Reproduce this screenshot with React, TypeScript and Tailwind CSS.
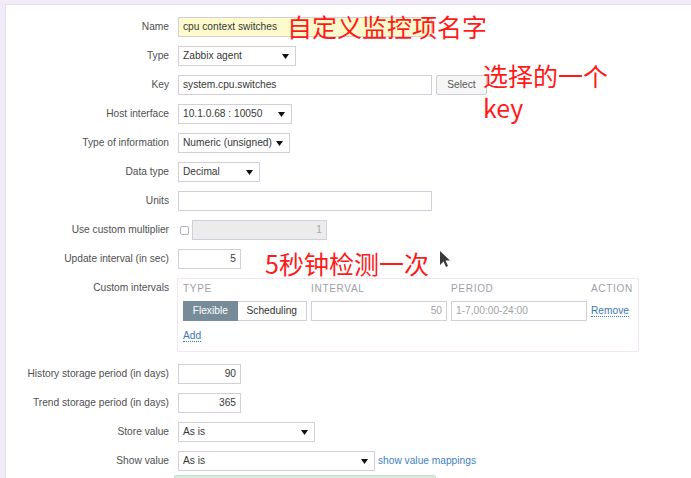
import React from 'react';

const FONT = "font-['Liberation_Sans',Arial,sans-serif]";
const INPUT = "h-[20px] border border-[#d3ced9] px-[4px] flex items-center";
const LINK = "text-[#3b78b6] border-b border-dotted border-[#3b78b6] leading-[11px]";
const HEAD = "leading-[12px] text-[10px] tracking-[0.7px] text-[#a0a0a6]";

const Arrow: React.FC = () => (
    <svg width="7" height="5" viewBox="0 0 7 5" className="shrink-0">
        <path d="M0 0 H7 L3.5 5 Z" fill="#111" />
    </svg>
);

const Select: React.FC<{ value: string; width: string }> = ({ value, width }) => (
    <div className={`${INPUT} ${width} bg-white text-[#383838] justify-between pr-[6px]`}>
        <span>{value}</span>
        <Arrow />
    </div>
);

const Row: React.FC<{ label: string; children: React.ReactNode; className?: string }> = ({ label, children, className }) => (
    <div className={`flex items-start gap-[9px] ${className ?? ''}`}>
        <div className="w-[163px] shrink-0 text-right leading-[20px] text-[#505050]">{label}</div>
        <div className="flex items-center">{children}</div>
    </div>
);

const App: React.FC = () => {
    return (
        <div className={`relative min-h-screen overflow-hidden bg-[#f1ecf8] pt-[4px] pl-[5px] text-[10.2px] ${FONT}`}>
            <div className="border-t border-l border-[#e6def0] bg-white pt-[12px] pb-[20px] flex flex-col gap-[9px] min-h-[480px]">
                <Row label="Name">
                    <div className={`${INPUT} w-[254px] bg-[#fdfacb] text-[#383838]`}>cpu context switches</div>
                </Row>
                <Row label="Type">
                    <Select value="Zabbix agent" width="w-[118px]" />
                </Row>
                <Row label="Key">
                    <div className={`${INPUT} w-[254px] bg-white text-[#383838]`}>system.cpu.switches</div>
                    <div className="ml-[4px] h-[20px] w-[51px] border border-[#cfcbd6] rounded-[2px] bg-[#f6f6f6] flex items-center justify-center text-[#555]">
                        Select
                    </div>
                </Row>
                <Row label="Host interface">
                    <Select value="10.1.0.68 : 10050" width="w-[114px]" />
                </Row>
                <Row label="Type of information">
                    <Select value="Numeric (unsigned)" width="w-[112px]" />
                </Row>
                <Row label="Data type">
                    <Select value="Decimal" width="w-[82px]" />
                </Row>
                <Row label="Units">
                    <div className={`${INPUT} w-[254px] bg-white`} />
                </Row>
                <Row label="Use custom multiplier">
                    <div className="ml-[2px] h-[9px] w-[9px] rounded-[2px] border border-[#b5b0bc] bg-white" />
                    <div className={`${INPUT} ml-[3px] w-[135px] justify-end bg-[#ececec] text-[#aaa]`}>1</div>
                </Row>
                <Row label="Update interval (in sec)">
                    <div className={`${INPUT} w-[63px] justify-end bg-white text-[#383838]`}>5</div>
                </Row>
                <Row label="Custom intervals" className="mb-[3px]">
                    <div className="-ml-[1px] w-[462px] border border-[#f2e6f3] pt-[4px] px-[5px] pb-[9px]">
                        <div className="grid grid-cols-[124px_136px_136px_auto] gap-x-[4px] gap-y-[6px]">
                            <div className={HEAD}>TYPE</div>
                            <div className={HEAD}>INTERVAL</div>
                            <div className={HEAD}>PERIOD</div>
                            <div className={HEAD}>ACTION</div>

                            <div className="flex h-[20px]">
                                <div className="w-[55px] bg-[#768d99] text-white flex items-center justify-center">Flexible</div>
                                <div className="w-[70px] border border-l-0 border-[#d3ced9] text-[#333] flex items-center justify-center">Scheduling</div>
                            </div>
                            <div className={`${INPUT} justify-end bg-white text-[#a3a3a3]`}>50</div>
                            <div className={`${INPUT} bg-white text-[#a3a3a3]`}>1-7,00:00-24:00</div>
                            <div className="flex items-center">
                                <span className={LINK}>Remove</span>
                            </div>
                        </div>
                        <div className="mt-[9px] flex">
                            <span className={LINK}>Add</span>
                        </div>
                    </div>
                </Row>
                <Row label="History storage period (in days)">
                    <div className={`${INPUT} w-[63px] justify-end bg-white text-[#383838]`}>90</div>
                </Row>
                <Row label="Trend storage period (in days)">
                    <div className={`${INPUT} w-[63px] justify-end bg-white text-[#383838]`}>365</div>
                </Row>
                <Row label="Store value">
                    <Select value="As is" width="w-[137px]" />
                </Row>
                <Row label="Show value">
                    <Select value="As is" width="w-[197px]" />
                    <span className="ml-[3px] text-[#3f80c2]">show value mappings</span>
                </Row>
                <div className="-mt-[5px] ml-[168px] h-[20px] w-[262px] rounded-t-[2px] border border-[#c7dec9] bg-[#d8ead9]" />
            </div>

            {/* red annotations over the screenshot */}
            <div className="absolute left-[287px] top-[14px] text-[25px] leading-none text-[#ff1a1a] font-['Noto_Sans_CJK_SC',sans-serif]">
                自定义监控项名字
            </div>
            <div className="absolute left-[483px] top-[59px] text-[25px] leading-[32px] text-[#ff1a1a] font-['Noto_Sans_CJK_SC',sans-serif]">
                选择的一个
                <br />
                key
            </div>
            <div className="absolute left-[265px] top-[251px] text-[25px] leading-none text-[#ff1a1a] font-['Noto_Sans_CJK_SC',sans-serif]">
                5秒钟检测一次
            </div>

            {/* mouse pointer */}
            <svg className="absolute left-[439px] top-[250px]" width="12" height="18" viewBox="0 0 12 18">
                <path d="M1 1 L1 15 L4.5 11.5 L7 17 L9 16 L6.5 10.5 L11 10.5 Z" fill="#3a3a3a" />
            </svg>
        </div>
    );
};

export default App;
